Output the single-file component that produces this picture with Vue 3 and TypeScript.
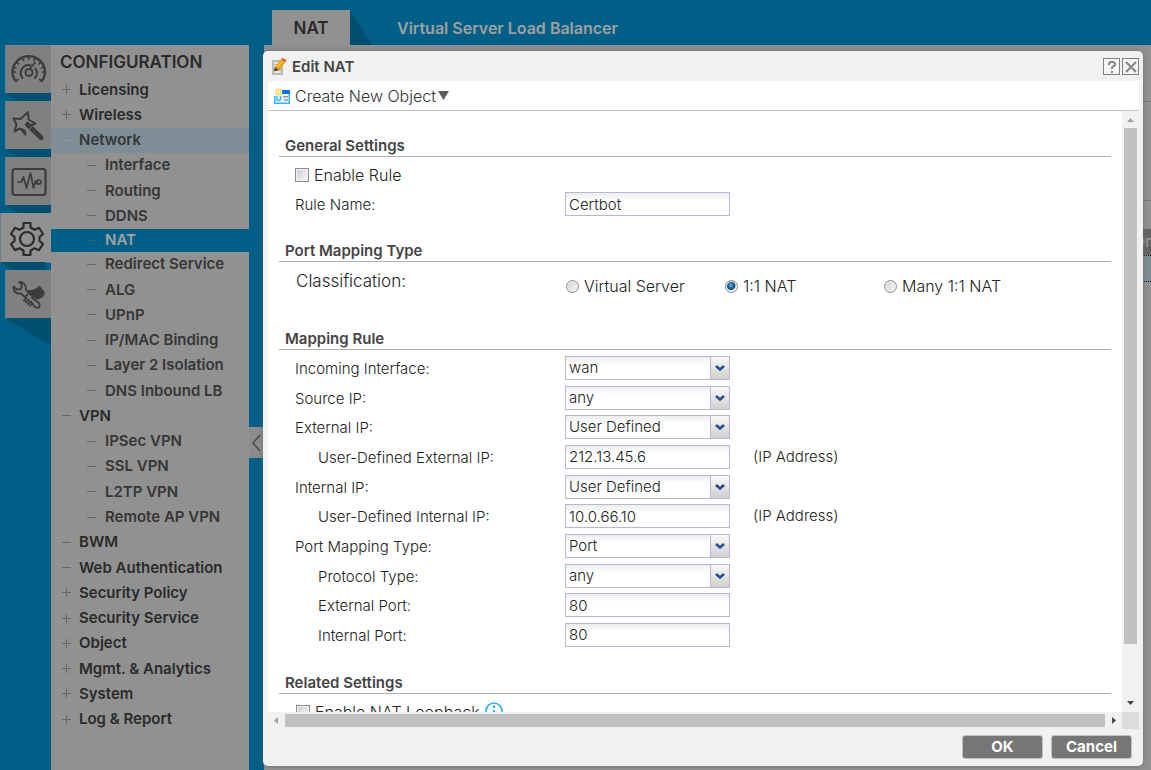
<script setup lang="ts">
import { reactive } from 'vue'

interface NavItem {
  label: string
  mark?: 'plus' | 'minus'
  level?: 'sub'
  state?: 'open' | 'active'
}

interface Field {
  id: string
  label: string
  kind: 'select' | 'text'
  options?: string[]
  indent?: boolean
  note?: string
}

const nav: NavItem[] = [
  { label: 'Licensing', mark: 'plus' },
  { label: 'Wireless', mark: 'plus' },
  { label: 'Network', mark: 'minus', state: 'open' },
  { label: 'Interface', level: 'sub' },
  { label: 'Routing', level: 'sub' },
  { label: 'DDNS', level: 'sub' },
  { label: 'NAT', level: 'sub', state: 'active' },
  { label: 'Redirect Service', level: 'sub' },
  { label: 'ALG', level: 'sub' },
  { label: 'UPnP', level: 'sub' },
  { label: 'IP/MAC Binding', level: 'sub' },
  { label: 'Layer 2 Isolation', level: 'sub' },
  { label: 'DNS Inbound LB', level: 'sub' },
  { label: 'VPN', mark: 'minus' },
  { label: 'IPSec VPN', level: 'sub' },
  { label: 'SSL VPN', level: 'sub' },
  { label: 'L2TP VPN', level: 'sub' },
  { label: 'Remote AP VPN', level: 'sub' },
  { label: 'BWM', mark: 'minus' },
  { label: 'Web Authentication', mark: 'minus' },
  { label: 'Security Policy', mark: 'plus' },
  { label: 'Security Service', mark: 'plus' },
  { label: 'Object', mark: 'plus' },
  { label: 'Mgmt. & Analytics', mark: 'plus' },
  { label: 'System', mark: 'plus' },
  { label: 'Log & Report', mark: 'plus' },
]

const fields: Field[] = [
  { id: 'incoming', label: 'Incoming Interface:', kind: 'select', options: ['wan', 'lan1', 'lan2'] },
  { id: 'source', label: 'Source IP:', kind: 'select', options: ['any', 'User Defined'] },
  { id: 'external', label: 'External IP:', kind: 'select', options: ['User Defined', 'any'] },
  { id: 'externalIp', label: 'User-Defined External IP:', kind: 'text', indent: true, note: '(IP Address)' },
  { id: 'internal', label: 'Internal IP:', kind: 'select', options: ['User Defined', 'any'] },
  { id: 'internalIp', label: 'User-Defined Internal IP:', kind: 'text', indent: true, note: '(IP Address)' },
  { id: 'mapping', label: 'Port Mapping Type:', kind: 'select', options: ['Port', 'Ports', 'any'] },
  { id: 'protocol', label: 'Protocol Type:', kind: 'select', options: ['any', 'TCP', 'UDP'], indent: true },
  { id: 'externalPort', label: 'External Port:', kind: 'text', indent: true },
  { id: 'internalPort', label: 'Internal Port:', kind: 'text', indent: true },
]

const kinds = ['Virtual Server', '1:1 NAT', 'Many 1:1 NAT']

const form = reactive({
  enabled: false,
  name: 'Certbot',
  kind: '1:1 NAT',
  loopback: false,
})

const values = reactive<Record<string, string>>({
  incoming: 'wan',
  source: 'any',
  external: 'User Defined',
  externalIp: '212.13.45.6',
  internal: 'User Defined',
  internalIp: '10.0.66.10',
  mapping: 'Port',
  protocol: 'any',
  externalPort: '80',
  internalPort: '80',
})
</script>

<template>
  <div class="page">
    <nav class="rail" aria-label="Sections">
      <button type="button" class="tile" aria-label="Dashboard">
        <svg width="36" height="32" viewBox="0 0 36 32" fill="none" stroke="#3c3c3c" stroke-linecap="round">
          <path d="M5 27C2 24 1.500 21 1.500 18a16 15.500 0 0 1 32.500 0c0 3-.5 6-3.500 9" stroke-width="2.400" />
          <path d="M5 27l2-1.500M30.500 27l-2-1.500M2 18h2.500M34 18h-2.500M6 8.500l1.500 1.500M29.500 8.500l-1.500 1.500M17.700 3v2.500M11.500 4.500l1 2M24 4.500l-1 2M3 13l2 1M32.500 13l-2 1" stroke-width="1.600" />
          <path d="M11.500 24a8 8 0 0 1 8-12.800M24.500 14.500a8 8 0 0 1-.5 9.500" stroke-width="2" />
          <path d="M19 14.500l5-6" stroke-width="1.800" />
          <circle cx="18" cy="18.500" r="3.500" stroke-width="2" />
        </svg>
      </button>
      <button type="button" class="tile" aria-label="Quick setup">
        <svg width="36" height="32" viewBox="0 0 36 32" fill="none" stroke="#3c3c3c" stroke-linejoin="round">
          <path d="M13.500 20.500L9 18.500l-5.500 3 2-7L2.500 8.500l7 .5L17 2l.5 7.500 7 4-5 2M13.500 20.500l1 4-4-4.500" stroke-width="2" />
          <path d="M16.500 14.500L30 27.500" stroke-width="5" stroke-linecap="round" />
          <path d="M18 19.500l3-3" stroke="#808080" stroke-width="1" />
        </svg>
      </button>
      <button type="button" class="tile" aria-label="Monitor">
        <svg width="36" height="32" viewBox="0 0 36 32" fill="none" stroke="#3c3c3c">
          <rect x="1.500" y="3" width="33" height="26" rx="2.500" stroke-width="2.200" />
          <path d="M6.500 16h4l2-5 3 11 4-15 3 15 2-7 1.500 3h2" stroke-width="1.700" stroke-linejoin="round" />
          <circle cx="28" cy="16" r="2" stroke-width="1.700" />
        </svg>
      </button>
      <button type="button" class="tile current" aria-label="Configuration">
        <svg width="36" height="36" viewBox="0 0 36 36" fill="none" stroke="#2b2b2b" stroke-width="2.200" stroke-linejoin="round">
          <path d="M14.500 2h7v4.500l4 2.300 4.500-2 4 6.200-3.500 3v4l3.500 3-4 6.200-4.500-2-4 2.300V34h-7v-4.500l-4-2.300-4.500 2L2 23l3.500-3v-4L2 13l4-6.200 4.500 2 4-2.300z" />
          <circle cx="18" cy="18" r="7" />
        </svg>
      </button>
      <button type="button" class="tile" aria-label="Maintenance">
        <svg width="36" height="32" viewBox="0 0 36 32" fill="none" stroke="#3c3c3c" stroke-linejoin="round">
          <path d="M8 3l3 3-1 4-4 .5-3.500-3c-.5 5 3 8 7.500 7L14 18l4-4-3-3C15.500 6 12 2 8 3z" stroke-width="1.800" />
          <path d="M17 11.500c4 1 5-1 9-2L28.500 7l5 6.500-2 4.500-5.500 2-7-4z" fill="#3c3c3c" stroke-width="1" />
          <path d="M20 18l8 6c2 4-1 6-4 4l-5-6" stroke-width="1.800" />
          <path d="M13.500 19.500l7.500 6.500" stroke-width="5.500" stroke-dasharray="2 .7" />
        </svg>
      </button>
    </nav>

    <aside class="menu">
      <h1>CONFIGURATION</h1>
      <ul>
        <li v-for="item in nav" :key="item.label" :class="[item.level, item.state]">
          <svg class="mark" width="11" height="11" viewBox="0 0 11 11" stroke-width="1">
            <path :d="item.mark === 'plus' ? 'M1 5.500h9M5.500 1v9' : 'M1 5.500h9'" />
          </svg>
          <a href="#">{{ item.label }}</a>
        </li>
      </ul>
    </aside>

    <div class="gutter">
      <button type="button" class="collapse" aria-label="Collapse menu">
        <svg width="13" height="18" viewBox="0 0 13 18" fill="none" stroke="#4a4a4a" stroke-width="1.500"><path d="M11 1L4 9l7 8" /></svg>
      </button>
    </div>

    <main class="content">
      <div class="tabs">
        <a href="#" class="tab selected">NAT</a>
        <a href="#" class="tab">Virtual Server Load Balancer</a>
      </div>
      <div class="sheet">
        <div class="band first"></div>
        <div class="band second"></div>
        <div class="band third"></div>
        <div class="head">er</div>
        <div class="line"></div>
      </div>
    </main>

    <section class="dialog" role="dialog" aria-labelledby="dialog-title">
      <header class="titlebar">
        <svg width="16" height="18" viewBox="0 0 16 18">
          <path d="M1 2h11v15H1z" fill="#b9b9b9" />
          <path d="M3 5h5M3 8h3M3 14h7" stroke="#f4f4f4" stroke-width="1.500" />
          <path d="M4 9l6-7.500 4 3L8 12l-4.500 1z" fill="#f5a300" />
          <path d="M10 1.500l1.500-1.500 4 2-1.500 2.500z" fill="#d9572b" />
          <path d="M4 9l4 3-5 1.500z" fill="#5b4630" />
          <path d="M6 9.500l6-7" stroke="#ffd35a" stroke-width="1" />
        </svg>
        <h2 id="dialog-title">Edit NAT</h2>
        <button type="button" class="tool" aria-label="Help">
          <svg width="14" height="14" viewBox="0 0 14 14" fill="none" stroke="#858585" stroke-width="2"><path d="M4 5V3.500L5.500 2h3L10 3.500V5L7 7.500V9M7 11v2" /></svg>
        </button>
        <button type="button" class="tool" aria-label="Close">
          <svg width="14" height="14" viewBox="0 0 14 14" stroke="#858585" stroke-width="2"><path d="M2 2l10 10M12 2L2 12" /></svg>
        </button>
      </header>

      <div class="toolbar">
        <button type="button" class="create">
          <svg width="16" height="16" viewBox="0 0 16 16">
            <path d="M2 3h14v13H1V7z" fill="#eaf6fc" />
            <path d="M8 2h8v4H8z" fill="#0b74e5" />
            <path d="M.8 8v7.200h14.500V6" fill="none" stroke="#37b6f0" stroke-width="1.500" />
            <path d="M3 8v3.500q1.700 2 3.500 0V8" fill="none" stroke="#37b6f0" stroke-width="1.500" />
            <path d="M9 8.800h5M10 12h4" stroke="#8d9aa5" stroke-width="1.500" />
            <path d="M4.500 0v8M.5 4h8M1.500 1l6 6M7.500 1l-6 6" stroke="#fbd34b" stroke-width="1.200" />
            <circle cx="4.500" cy="4" r="1.500" fill="#fff6c4" />
          </svg>
          <span>Create New Object</span>
          <svg width="11" height="9" viewBox="0 0 11 9"><path d="M0 0h11L5.500 9z" fill="#5d5d5d" /></svg>
        </button>
      </div>

      <div class="pane">
        <form class="form" @submit.prevent>
          <h3>General Settings</h3>
          <div class="general">
            <label class="check"><input v-model="form.enabled" type="checkbox" />Enable Rule</label>
            <div class="row">
              <label for="rule-name">Rule Name:</label>
              <input id="rule-name" v-model="form.name" type="text" class="box" />
            </div>
          </div>

          <h3>Port Mapping Type</h3>
          <div class="class-row" role="radiogroup" aria-labelledby="kind-label">
            <span id="kind-label">Classification:</span>
            <div class="radios">
              <label v-for="kind in kinds" :key="kind">
                <input v-model="form.kind" type="radio" name="kind" :value="kind" />{{ kind }}
              </label>
            </div>
          </div>

          <h3>Mapping Rule</h3>
          <div class="mapping">
            <div v-for="field in fields" :key="field.id" class="row">
              <label :for="field.id" :class="{ indent: field.indent }">{{ field.label }}</label>
              <div v-if="field.kind === 'select'" class="drop">
                <select :id="field.id" v-model="values[field.id]" class="box">
                  <option v-for="option in field.options" :key="option">{{ option }}</option>
                </select>
                <span class="arrow">
                  <svg width="10" height="6" viewBox="0 0 10 6" fill="none" stroke="#2b4c8c" stroke-width="2.600"><path d="M1 1l4 3.500L9 1" /></svg>
                </span>
              </div>
              <input v-else :id="field.id" v-model="values[field.id]" type="text" class="box" />
              <span v-if="field.note">{{ field.note }}</span>
            </div>
          </div>

          <h3>Related Settings</h3>
          <div class="related">
            <label class="check"><input v-model="form.loopback" type="checkbox" />Enable NAT Loopback</label>
            <svg width="18" height="18" viewBox="0 0 18 18">
              <circle cx="9" cy="9" r="8" fill="#fff" stroke="#2fb0e2" stroke-width="1.600" />
              <path d="M9 3.500v2.500M9 8v6" stroke="#2fb0e2" stroke-width="2.200" />
            </svg>
          </div>
        </form>
        <div class="vbar" aria-hidden="true">
          <svg width="7" height="4" viewBox="0 0 7 4"><path d="M3.500 0L7 4H0z" fill="#a0a0a0" /></svg>
          <div class="vtrack"><div class="vthumb"></div></div>
          <svg width="7" height="4" viewBox="0 0 7 4"><path d="M0 0h7L3.500 4z" fill="#454545" /></svg>
        </div>
        <div class="hbar" aria-hidden="true">
          <svg width="4" height="7" viewBox="0 0 4 7"><path d="M4 0v7L0 3.500z" fill="#a0a0a0" /></svg>
          <div class="hthumb"></div>
          <svg width="4" height="7" viewBox="0 0 4 7"><path d="M0 0l4 3.500L0 7z" fill="#454545" /></svg>
        </div>
        <div class="corner"></div>
      </div>

      <footer class="actions">
        <button type="button">OK</button>
        <button type="button">Cancel</button>
      </footer>
    </section>
  </div>
</template>

<style>
body {
  background: #005f86;
}
</style>

<style scoped>
* {
  box-sizing: border-box;
}

.page {
  position: relative;
  display: flex;
  min-height: 100vh;
  overflow: hidden;
  background: #005f86;
  color: #333;
  font-family: "Century Gothic", Inter, sans-serif;
  font-size: 15px;
  line-height: 20px;
}

a {
  color: inherit;
  text-decoration: none;
}

button,
input,
select {
  margin: 0;
  padding: 0;
  border: 0;
  color: inherit;
  font: inherit;
}

svg {
  display: block;
  flex: none;
}

h1,
h2,
h3,
ul {
  margin: 0;
  padding: 0;
}

.rail {
  display: flex;
  flex-direction: column;
  align-items: flex-end;
  gap: 7px;
  width: 51px;
  padding-top: 45px;
}

.tile {
  position: relative;
  display: flex;
  align-items: center;
  justify-content: center;
  width: 46px;
  height: 49px;
  padding-top: 2px;
  border: solid #6a7f89;
  border-width: 0 0 1px 1px;
  background: #808080;
}

.tile::after {
  content: "";
  position: absolute;
  top: 100%;
  left: -1px;
  width: 46px;
  height: 28px;
  background: #004f70;
  clip-path: polygon(0 0, 100% 0, 100% 100%);
}

.tile.current {
  width: 51px;
  height: 50px;
  padding-left: 2px;
  background: #919191;
}

.menu {
  flex: none;
  width: 198px;
  margin-top: 45px;
  padding-top: 6px;
  background: #919191;
}

.menu h1 {
  padding-left: 9px;
  color: #2a2a2a;
  font-size: 17px;
  font-weight: 600;
  line-height: 22px;
}

.menu ul {
  display: flex;
  flex-direction: column;
  justify-content: space-between;
  min-height: 655px;
  margin-top: 4px;
  list-style: none;
}

.menu li {
  display: flex;
  align-items: center;
  gap: 7px;
  height: 25px;
  padding-left: 10px;
  color: #2a2a2a;
  font-weight: 600;
}

.menu li.sub {
  gap: 8px;
  padding-left: 35px;
  color: #363636;
}

.menu li.open {
  background: #7f8e96;
  color: #363636;
}

.menu li.active {
  height: 23px;
  background: #005f86;
  color: #a3a3a3;
}

.mark {
  stroke: #666;
}

.open .mark {
  stroke: #9099a0;
}

.active .mark {
  stroke: #3f5c69;
}

.gutter {
  display: flex;
  flex: none;
  width: 15px;
  padding-top: 427px;
}

.collapse {
  display: flex;
  align-items: center;
  width: 14px;
  height: 31px;
  background: #8b8b8b;
}

.content {
  display: flex;
  flex: 1;
  flex-direction: column;
  min-width: 0;
}

.tabs {
  display: flex;
  height: 45px;
  padding: 10px 0 0 8px;
  color: #a0a0a0;
  font-size: 16px;
  font-weight: 600;
  line-height: 36px;
}

.tab.selected {
  position: relative;
  width: 78px;
  margin-right: 47px;
  background: #919191;
  color: #2b2b2b;
  font-size: 17px;
  text-align: center;
}

.tab.selected::after {
  content: "";
  position: absolute;
  top: 0;
  left: 100%;
  width: 22px;
  height: 35px;
  background: #004f70;
  clip-path: polygon(0 0, 100% 100%, 0 100%);
}

.sheet {
  flex: 1;
  background: #919191;
}

.band {
  border-bottom: 1px solid #777;
}

.first {
  height: 57px;
}

.second {
  height: 99px;
}

.third {
  height: 28px;
  border: 0;
}

.head {
  height: 26px;
  background: #646464;
  color: #a0a0a0;
  line-height: 26px;
  text-align: right;
}

.line {
  height: 27px;
  border: dotted #222;
  border-width: 1px 0;
  background: #7f8e96;
}

.dialog {
  position: absolute;
  inset: 51px 8px 4px 263px;
  display: flex;
  flex-direction: column;
  padding: 0 4px 0 5px;
  border-radius: 5px;
  background: #f1f1f1;
  box-shadow: 0 0 5px rgba(90, 100, 110, 0.7);
  color: #333;
}

.titlebar {
  display: flex;
  align-items: center;
  gap: 2px;
  height: 30px;
  padding: 1px 0 0 3px;
}

.titlebar h2 {
  flex: 1;
  padding-left: 3px;
  color: #444;
  font-size: 15px;
  font-weight: 600;
}

.tool {
  display: flex;
  align-items: center;
  justify-content: center;
  width: 17px;
  height: 17px;
  border: 1px solid #808080;
  background: #f5f5f5;
}

.toolbar {
  display: flex;
  height: 30px;
  padding-left: 6px;
  border-bottom: 1px solid #c4c4c4;
  background: #fff;
}

.create {
  display: flex;
  align-items: center;
  gap: 5px;
  background: none;
  font-size: 16px;
  font-weight: 300;
}

.create svg:last-child {
  margin-left: -3px;
}

.pane {
  display: grid;
  flex: 1;
  grid-template: minmax(0, 1fr) 17px / minmax(0, 1fr) 17px;
  min-height: 0;
}

.form {
  overflow: hidden;
  padding: 25px 11px 0;
  background: #fff;
  color: #222;
  font-weight: 300;
}

.form h3 {
  height: 21px;
  padding-left: 6px;
  border-bottom: 1px solid #b0b0b0;
  color: #444;
  font-size: 15px;
  font-weight: 600;
}

.general {
  display: flex;
  flex-direction: column;
  gap: 7px;
  padding: 8px 16px 25px;
}

.check {
  display: flex;
  align-items: center;
  gap: 5px;
  font-size: 16px;
}

.check input {
  width: 14px;
  height: 14px;
  appearance: none;
  border: 1px solid #8a8a8a;
  background: linear-gradient(135deg, #c9ccd2, #fafafa);
  box-shadow: inset 0 0 0 1px #f4f4f4;
}

.row {
  display: flex;
  align-items: center;
  height: 24px;
}

.row label {
  width: 270px;
  padding-top: 2px;
}

.row label.indent {
  padding-left: 23px;
}

.box {
  width: 165px;
  height: 24px;
  padding: 0 3px;
  appearance: none;
  border: 1px solid #b5b8cf;
  border-radius: 0;
  background: linear-gradient(#eceeee, #fff 8px);
}

.row > span {
  margin-left: 23px;
}

.drop {
  position: relative;
}

.drop .box {
  display: block;
}

.arrow {
  position: absolute;
  top: 1px;
  right: 1px;
  display: flex;
  align-items: center;
  justify-content: center;
  width: 19px;
  height: 22px;
  border-left: 1px solid #b5b8cf;
  background: linear-gradient(#fafafa, #cfcfcf);
  pointer-events: none;
}

.class-row {
  display: flex;
  height: 67px;
  padding: 9px 17px 0;
}

#kind-label {
  width: 270px;
  font-size: 17px;
}

.radios {
  display: flex;
  padding-top: 5px;
  font-size: 16px;
}

.radios label {
  display: flex;
  align-items: center;
  gap: 5px;
  width: 159px;
  height: 20px;
}

.radios input {
  width: 13px;
  height: 13px;
  appearance: none;
  border: 1px solid #8e8e8e;
  border-radius: 50%;
  background: linear-gradient(135deg, #cfcfcf, #fafafa);
  box-shadow: inset 0 0 0 1px #eee;
}

.radios input:checked {
  background: radial-gradient(circle at 45% 40%, #62c3ef 0, #1b6ea8 28%, #12476f 48%, #eee 54%);
}

.mapping {
  display: flex;
  flex-direction: column;
  justify-content: space-between;
  min-height: 291px;
  margin: 6px 16px 26px;
}

.related {
  display: flex;
  gap: 5px;
  padding: 8px 17px 0;
}

.vbar {
  display: flex;
  flex-direction: column;
  align-items: center;
  padding: 7px 0;
  background: #f1f1f1;
}

.vtrack {
  flex: 1;
  width: 13px;
  padding: 6px 0;
}

.vthumb {
  height: 91%;
  background: #c1c1c1;
}

.hbar {
  display: flex;
  align-items: center;
  gap: 7px;
  padding: 0 6px;
}

.hthumb {
  flex: 1;
  height: 13px;
  background: #c1c1c1;
}

.corner {
  background: #dcdcdc;
}

.actions {
  display: flex;
  gap: 8px;
  justify-content: flex-end;
  height: 37px;
  padding: 6px 7px 0 0;
}

.actions button {
  width: 81px;
  height: 24px;
  border: 1px solid #c2c2c2;
  border-radius: 3px;
  background: #767676;
  color: #fff;
  font-weight: 700;
}
</style>
